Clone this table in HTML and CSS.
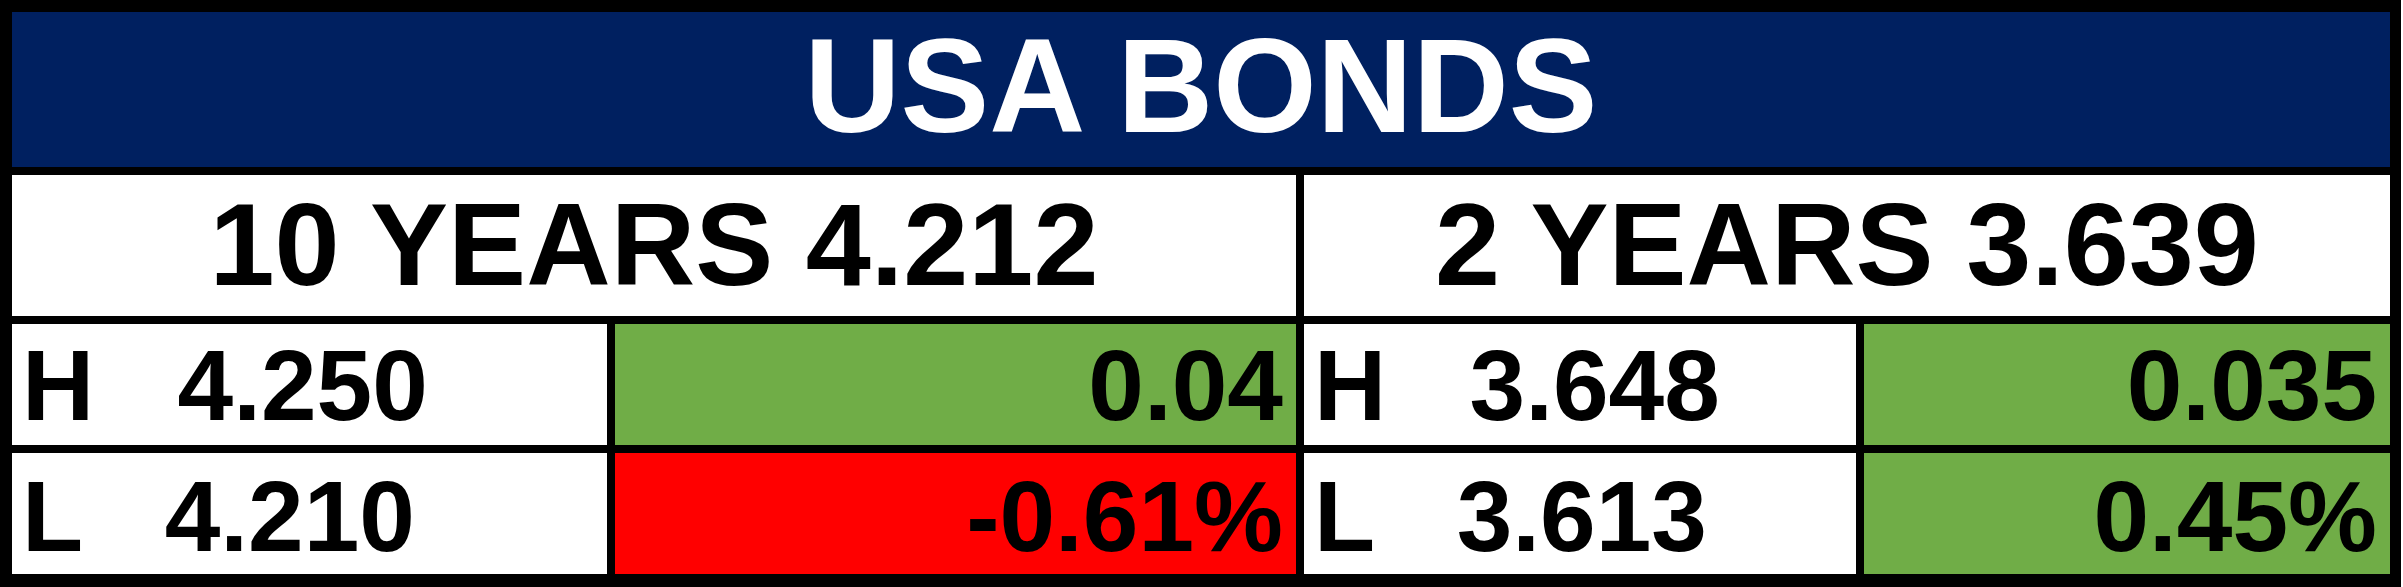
FILE: index.html
```html
<!DOCTYPE html>
<html lang="en">
<head>
  <meta charset="UTF-8">
  <title>USA Bonds</title>
  <link rel="stylesheet" href="styles.css">
</head>
<body>

  <div class="board">
    <div class="titulo">USA BONDS</div>

    <div class="plazo span-2">10 YEARS 4.212</div>
    <div class="plazo span-2">2 YEARS 3.639</div>

    <!-- fila maximos -->
    <div class="dato">H   4.250</div>
    <div class="cambio verde">0.04</div>
    <div class="dato">H   3.648</div>
    <div class="cambio verde">0.035</div>

    <!-- fila minimos -->
    <div class="dato fila-baja">L   4.210</div>
    <div class="cambio rojo fila-baja">-0.61%</div>
    <div class="dato fila-baja">L   3.613</div>
    <div class="cambio verde fila-baja">0.45%</div>
  </div>

</body>
</html>
```

FILE: styles.css
```css
:root {
  --navy: #002060;
  --green: #70ad47;
  --red: #ff0000;
  --line: #000000;
}

body {
  margin: 0;
  background-color: #ffffff;
  font-family: 'Liberation Sans', Arial, sans-serif;
  font-weight: bold;
  color: #000000;
}

.board {
  box-sizing: border-box;
  width: 2401px;
  height: 587px;
  display: grid;
  grid-template-columns: 595px 681px 552px 526px;
  grid-template-rows: 155px 141px 121px 121px;
  column-gap: 8px;
  row-gap: 8px;
  padding: 12px 11px 13px 12px;
  background-color: var(--line);
}

.board > div {
  display: flex;
  align-items: center;
  line-height: 1;
  background-color: #ffffff;
}

.titulo {
  grid-column: 1 / 5;
  justify-content: center;
  background-color: var(--navy) !important;
  color: #ffffff;
  font-size: 133px;
  padding-bottom: 6px;
}

.span-2 {
  grid-column: span 2;
}

.plazo {
  justify-content: center;
  font-size: 117px;
  padding-bottom: 2px;
}

.dato {
  white-space: pre;
  font-size: 100px;
  padding-left: 10px;
}

.cambio {
  justify-content: flex-end;
  font-size: 100px;
  padding-right: 13px;
}

.fila-baja {
  padding-top: 4px;
}

.verde {
  background-color: var(--green) !important;
}

.rojo {
  background-color: var(--red) !important;
}
```
